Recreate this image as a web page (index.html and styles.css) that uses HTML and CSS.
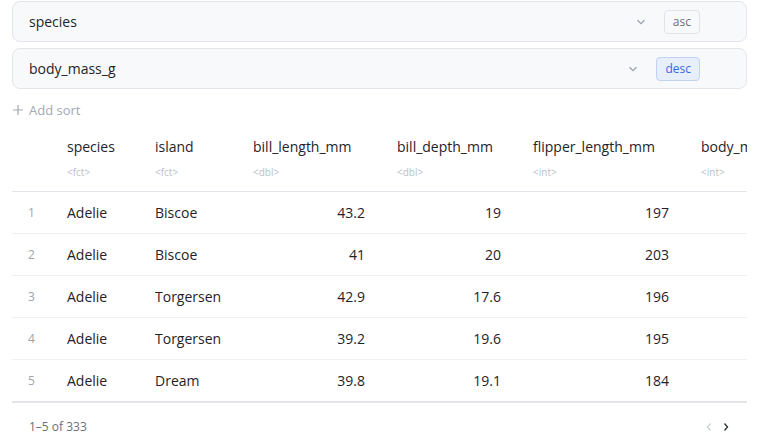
FILE: index.html
```html
<!DOCTYPE html>
<html lang="en">
<head>
    <meta charset="UTF-8">
    <title>Sort penguins</title>
    <link rel="stylesheet" href="styles.css">
</head>
<body>
    <div class="page">
        <div class="sort-row">
            <span class="sort-col">species</span>
            <svg class="chev" width="10" height="6" viewBox="0 0 10 6"><path d="M1.5 1.2 5 4.6 8.5 1.2" fill="none" stroke="#9ba1ab" stroke-width="1.3"/></svg>
            <button class="dir">asc</button>
        </div>
        <div class="sort-row">
            <span class="sort-col">body_mass_g</span>
            <svg class="chev" width="10" height="6" viewBox="0 0 10 6"><path d="M1.5 1.2 5 4.6 8.5 1.2" fill="none" stroke="#9ba1ab" stroke-width="1.3"/></svg>
            <button class="dir desc">desc</button>
        </div>

        <div class="add-sort">
            <svg width="12" height="12" viewBox="0 0 12 12"><path d="M6 1v10M1 6h10" stroke="#a3a8b0" stroke-width="1.2"/></svg>
            Add sort
        </div>

        <div class="table-wrap">
            <table class="grid">
                <colgroup>
                    <col style="width:43px">
                    <col style="width:88px">
                    <col style="width:98px">
                    <col style="width:144px">
                    <col style="width:136px">
                    <col style="width:168px">
                    <col style="width:140px">
                </colgroup>
                <thead>
                    <tr>
                        <th></th>
                        <th><div class="name">species</div><div class="type">&lt;fct&gt;</div></th>
                        <th><div class="name">island</div><div class="type">&lt;fct&gt;</div></th>
                        <th><div class="name">bill_length_mm</div><div class="type">&lt;dbl&gt;</div></th>
                        <th><div class="name">bill_depth_mm</div><div class="type">&lt;dbl&gt;</div></th>
                        <th><div class="name">flipper_length_mm</div><div class="type">&lt;int&gt;</div></th>
                        <th><div class="name">body_mass_g</div><div class="type">&lt;int&gt;</div></th>
                    </tr>
                </thead>
                <tbody>
                    <tr><td class="idx">1</td><td>Adelie</td><td>Biscoe</td><td class="num">43.2</td><td class="num">19</td><td class="num">197</td><td class="num"></td></tr>
                    <tr><td class="idx">2</td><td>Adelie</td><td>Biscoe</td><td class="num">41</td><td class="num">20</td><td class="num">203</td><td class="num"></td></tr>
                    <tr><td class="idx">3</td><td>Adelie</td><td>Torgersen</td><td class="num">42.9</td><td class="num">17.6</td><td class="num">196</td><td class="num"></td></tr>
                    <tr><td class="idx">4</td><td>Adelie</td><td>Torgersen</td><td class="num">39.2</td><td class="num">19.6</td><td class="num">195</td><td class="num"></td></tr>
                    <tr><td class="idx">5</td><td>Adelie</td><td>Dream</td><td class="num">39.8</td><td class="num">19.1</td><td class="num">184</td><td class="num"></td></tr>
                </tbody>
            </table>
        </div>

        <div class="footer">
            <span class="count">1–5 of 333</span>
            <div class="pager">
                <svg width="6" height="10" viewBox="0 0 6 10"><path d="M4.5 1.5 1.5 5 4.5 8.5" fill="none" stroke="#c9cdd3" stroke-width="1.2"/></svg>
                <svg width="6" height="10" viewBox="0 0 6 10"><path d="M1.5 1.5 4.5 5 1.5 8.5" fill="none" stroke="#2b2f36" stroke-width="1.3"/></svg>
            </div>
        </div>
    </div>
</body>
</html>
```

FILE: styles.css
```css
body {
    margin: 0;
    font-family: "Open Sans", "Liberation Sans", sans-serif;
    color: #1f2328;
    background: #fff;
}

.page {
    width: 735px;
    padding: 1px 0 0 12px;
}

.sort-row {
    display: flex;
    align-items: center;
    height: 41px;
    box-sizing: border-box;
    margin-bottom: 6px;
    padding: 0 46px 0 16px;
    background: #f8f9fb;
    border: 1px solid #e3e5ea;
    border-radius: 8px;
}

.sort-col {
    flex: 1;
    font-size: 14px;
}

.chev {
    margin-right: 18px;
}

.dir {
    height: 24px;
    padding: 0 8px;
    font-family: inherit;
    font-size: 12px;
    color: #6b7079;
    background: #f8f9fb;
    border: 1px solid #e1e3e8;
    border-radius: 4px;
}

.dir.desc {
    color: #3569e0;
    background: #e7eefc;
    border-color: #c0d2f5;
}

.add-sort {
    display: flex;
    align-items: center;
    gap: 5px;
    margin-top: 11px;
    height: 20px;
    font-size: 13px;
    color: #a3a8b0;
}

/* body_mass_g column runs past the right edge, as in the app */
.table-wrap {
    overflow: hidden;
    margin-top: 5px;
}

.grid {
    border-collapse: collapse;
    table-layout: fixed;
    width: 817px;
    font-size: 14px;
}

.grid th {
    text-align: left;
    font-weight: normal;
    padding: 12px 0 12px 12px;
    border-bottom: 1px solid #e3e5ea;
    white-space: nowrap;
}

.grid .name {
    line-height: 20px;
}

.grid .type {
    margin-top: 8px;
    line-height: 14px;
    font-size: 10px;
    color: #bcc0c7;
}

.grid td {
    height: 41px;
    padding: 0 0 0 12px;
    border-bottom: 1px solid #eef0f2;
    white-space: nowrap;
}

.grid td.idx {
    padding-left: 16px;
    font-size: 12px;
    color: #a0a4ab;
}

.grid td.num {
    text-align: right;
    padding: 0 20px 0 0;
}

.grid tbody tr:last-child td {
    border-bottom: 2px solid #e3e5ea;
}

.footer {
    display: flex;
    align-items: center;
    justify-content: space-between;
    padding: 15px 18px 0 17px;
}

.count {
    font-size: 12px;
    color: #6b7079;
}

.pager {
    display: flex;
    gap: 11px;
}
```
